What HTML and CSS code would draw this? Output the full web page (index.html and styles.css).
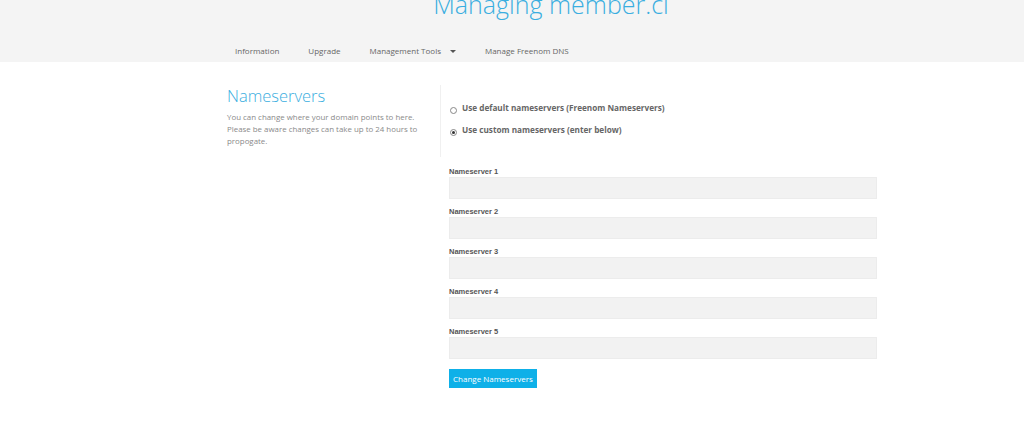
FILE: index.html
```html
<!DOCTYPE html>
<html>
<head>
<meta charset="utf-8">
<link rel="stylesheet" href="styles.css">
</head>
<body>
<header class="header">
  <h1 class="title">Managing member.ci</h1>
  <nav class="nav">
    <a class="nav-item">Information</a>
    <a class="nav-item">Upgrade</a>
    <a class="nav-item">Management Tools <span class="caret"></span></a>
    <a class="nav-item">Manage Freenom DNS</a>
  </nav>
</header>
<main class="content">
  <section class="top">
    <div class="intro">
      <h2 class="heading">Nameservers</h2>
      <p class="desc">You can change where your domain points to here. Please be aware changes can take up to 24 hours to propogate.</p>
    </div>
    <div class="choices">
      <label class="choice"><span class="radio"></span>Use default nameservers (Freenom Nameservers)</label>
      <label class="choice"><span class="radio checked"></span>Use custom nameservers (enter below)</label>
    </div>
  </section>
  <section class="fields">
    <div class="field"><div class="label">Nameserver 1</div><div class="input"></div></div>
    <div class="field"><div class="label">Nameserver 2</div><div class="input"></div></div>
    <div class="field"><div class="label">Nameserver 3</div><div class="input"></div></div>
    <div class="field"><div class="label">Nameserver 4</div><div class="input"></div></div>
    <div class="field"><div class="label">Nameserver 5</div><div class="input"></div></div>
    <button class="btn">Change Nameservers</button>
  </section>
</main>
</body>
</html>
```

FILE: styles.css
```css
* { box-sizing: border-box; }
body {
  margin: 0;
  background: #fff;
  font-family: "Open Sans", "Liberation Sans", sans-serif;
}
.header {
  background: #f4f4f4;
  height: 62px;
  overflow: hidden;
}
.title {
  margin: 0;
  margin-top: -12px;
  text-align: center;
  padding-left: 78px;
  font-size: 25px;
  font-weight: 300;
  color: #3aaee0;
  line-height: 32px;
  height: 32px;
}
.nav {
  display: flex;
  margin-left: 235px;
  margin-top: 25px;
}
.nav-item {
  font-size: 8px;
  color: #666;
  margin-right: 29px;
  display: flex;
  align-items: center;
  line-height: 12px;
}
.caret {
  display: inline-block;
  margin-left: 9px;
  width: 0;
  height: 0;
  border-left: 3px solid transparent;
  border-right: 3px solid transparent;
  border-top: 3px solid #555;
}
.content {
  margin-left: 227px;
  width: 650px;
}
.top {
  display: flex;
  padding-top: 24px;
}
.intro {
  width: 213px;
}
.heading {
  margin: 0;
  font-size: 16.5px;
  font-weight: 300;
  color: #3aaee0;
  line-height: 20px;
}
.desc {
  margin: 5px 0 0;
  font-size: 7.9px;
  line-height: 12px;
  color: #8a8a8a;
  width: 205px;
}
.choices {
  border-left: 1px solid #f0f0f0;
  height: 72px;
  margin-top: -1px;
  padding-left: 9px;
  padding-top: 17px;
  display: flex;
  flex-direction: column;
  gap: 10px;
}
.choice {
  display: flex;
  align-items: center;
  font-size: 8.2px;
  font-weight: 700;
  color: #666;
  line-height: 12px;
}
.radio {
  width: 7px;
  height: 7px;
  border: 1px solid #888;
  border-radius: 50%;
  margin-right: 5px;
  margin-top: 4px;
  position: relative;
}
.radio.checked::after {
  content: "";
  position: absolute;
  left: 1px;
  top: 1px;
  width: 3px;
  height: 3px;
  border-radius: 50%;
  background: #333;
}
.fields {
  margin-left: 222px;
  padding-top: 10px;
  display: flex;
  flex-direction: column;
  align-items: flex-start;
}
.field {
  width: 428px;
  margin-bottom: 8px;
}
.label {
  font-family: "Liberation Sans", Arial, sans-serif;
  font-size: 7.5px;
  font-weight: 700;
  color: #555;
  line-height: 10px;
}
.input {
  height: 22px;
  background: #f2f2f2;
  border: 1px solid #ececec;
}
.btn {
  margin-top: 2px;
  background: #0eb0e8;
  color: #fff;
  border: none;
  font-family: "Open Sans", "Liberation Sans", sans-serif;
  font-size: 8px;
  padding: 0 4px;
  height: 19px;
  line-height: 19px;
}
```
